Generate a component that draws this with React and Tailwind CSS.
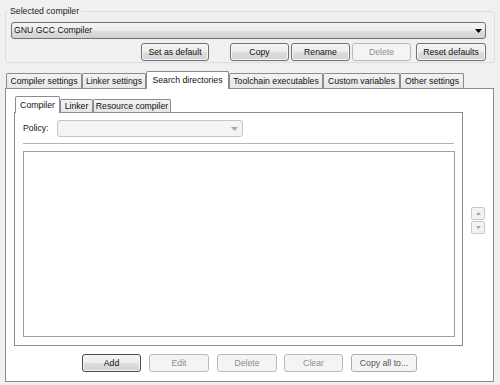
import React from "react";

const Arrow = ({ color = "#000" }) => (
  <svg width="7" height="4" viewBox="0 0 7 4">
    <path d="M0 0H7L3.5 4Z" fill={color} />
  </svg>
);

const Btn = ({ children, w, disabled, def }) => (
  <div
    className={`flex items-center justify-center h-[18px] rounded-[3px] border ${w} ${
      disabled
        ? "border-[#b7bbbe] bg-[#f4f4f4] text-[#8c8c8c]"
        : def
        ? "border-[#4a4a4a] bg-[linear-gradient(#f4f4f4_0%,#ececec_50%,#dedede_51%,#d2d2d2_100%)] text-[#111] shadow-[inset_0_0_0_1px_#f8f8f8]"
        : "border-[#707070] bg-[linear-gradient(#f4f4f4_0%,#ececec_50%,#dedede_51%,#d2d2d2_100%)] text-[#111] shadow-[inset_0_0_0_1px_#f8f8f8]"
    }`}
  >
    {children}
  </div>
);

const Tab = ({ children, w, sel, h, hs }) =>
  sel ? (
    <div
      className={`${w} ${hs} mb-[-1px] relative z-10 flex items-center justify-center border-t border-x border-[#898c95] bg-white rounded-t-[2px] text-[#111]`}
    >
      {children}
    </div>
  ) : (
    <div
      className={`${w} ${h} flex items-center justify-center border-t border-x border-[#898c95] bg-[linear-gradient(#f3f3f3,#e6e6e6)] rounded-t-[2px] text-[#111]`}
    >
      {children}
    </div>
  );

export default function App() {
  return (
    <div className="w-[500px] h-[385px] bg-[#f0f0f0] overflow-hidden font-['Liberation_Sans',Arial,sans-serif] text-[8.7px] text-[#1a1a1a] leading-none flex flex-col">
      <fieldset className="mt-[5px] ml-[5px] w-[490px] border border-[#d5dfe5] rounded-[3px] min-w-0">
        <legend className="ml-[2px] px-[2px] leading-[12px] text-[#1a1a1a]">Selected compiler</legend>
        <div className="pl-[5px] pb-[1px]">
          <div className="mt-[5px] w-[475px] h-[17px] flex items-center justify-between pl-[2px] pr-[3px] border border-[#707070] rounded-[3px] bg-[linear-gradient(#f4f4f4_0%,#ececec_50%,#dedede_51%,#d2d2d2_100%)] text-[#111]">
            <span>GNU GCC Compiler</span>
            <Arrow />
          </div>
          <div className="flex mt-[4px]">
            <div className="ml-[130px]">
              <Btn w="w-[68px]">Set as default</Btn>
            </div>
            <div className="ml-[21px]">
              <Btn w="w-[59px]">Copy</Btn>
            </div>
            <div className="ml-[2px]">
              <Btn w="w-[59px]">Rename</Btn>
            </div>
            <div className="ml-[2px]">
              <Btn w="w-[59px]" disabled>
                Delete
              </Btn>
            </div>
            <div className="ml-[5px]">
              <Btn w="w-[70px]">Reset defaults</Btn>
            </div>
          </div>
        </div>
      </fieldset>

      <div className="mt-[8px] h-[17px] flex items-end pl-[6px]">
        <Tab w="w-[76px]" h="h-[15px]">Compiler settings</Tab>
        <Tab w="w-[64px]" h="h-[15px]">Linker settings</Tab>
        <Tab w="w-[83px]" hs="h-[18px]" sel>
          Search directories
        </Tab>
        <Tab w="w-[94px]" h="h-[15px]">Toolchain executables</Tab>
        <Tab w="w-[77px]" h="h-[15px]">Custom variables</Tab>
        <Tab w="w-[64px]" h="h-[15px]">Other settings</Tab>
      </div>

      <div className="ml-[5px] w-[489px] h-[294px] border border-[#898c95] bg-white flex flex-col">
        <div className="flex pl-[8px] mt-[7px]">
          <div className="flex flex-col">
            <div className="h-[16px] flex items-end pl-[1px]">
              <Tab w="w-[45px]" hs="h-[17px]" sel>
                Compiler
              </Tab>
              <Tab w="w-[33px]" h="h-[13px]">Linker</Tab>
              <Tab w="w-[78px]" h="h-[13px]">Resource compiler</Tab>
            </div>
            <div className="w-[449px] h-[234px] border border-[#898c95] bg-white flex flex-col">
              <div className="mt-[7px] pl-[8px] h-[17px] flex items-center">
                <span className="w-[34px] text-[#111]">Policy:</span>
                <div className="w-[186px] h-[17px] flex items-center justify-end pr-[4px] border border-[#c3c6c9] rounded-[3px] bg-[#f4f4f4]">
                  <Arrow color="#a8a8a8" />
                </div>
              </div>
              <div className="mt-[6px] ml-[8px] w-[431px] h-[2px] border-t border-t-[#b4b4b4] border-b border-b-white" />
              <div className="mt-[6px] ml-[8px] w-[432px] h-[186px] border border-[#9a9ea6] bg-white" />
            </div>
          </div>
          <div className="ml-[8px] mt-[111px] flex flex-col gap-[1px]">
            <div className="w-[14px] h-[13px] flex items-center justify-center border border-[#c8cbce] rounded-[2px] bg-[#f2f2f2]">
              <svg width="5" height="3" viewBox="0 0 5 3">
                <path d="M0 3H5L2.5 0Z" fill="#a6a6a6" />
              </svg>
            </div>
            <div className="w-[14px] h-[13px] flex items-center justify-center border border-[#c8cbce] rounded-[2px] bg-[#f2f2f2]">
              <svg width="5" height="3" viewBox="0 0 5 3">
                <path d="M0 0H5L2.5 3Z" fill="#a6a6a6" />
              </svg>
            </div>
          </div>
        </div>

        <div className="flex mt-[8px] ml-[76px]">
          <Btn w="w-[59px]" def>
            Add
          </Btn>
          <div className="ml-[8px]">
            <Btn w="w-[60px]" disabled>
              Edit
            </Btn>
          </div>
          <div className="ml-[8px]">
            <Btn w="w-[60px]" disabled>
              Delete
            </Btn>
          </div>
          <div className="ml-[7px]">
            <Btn w="w-[59px]" disabled>
              Clear
            </Btn>
          </div>
          <div className="ml-[8px]">
            <div className="flex items-center justify-center h-[18px] w-[66px] rounded-[3px] border border-[#a9adb1] bg-[#f4f4f4] text-[#555]">
              Copy all to...
            </div>
          </div>
        </div>
      </div>
    </div>
  );
}
